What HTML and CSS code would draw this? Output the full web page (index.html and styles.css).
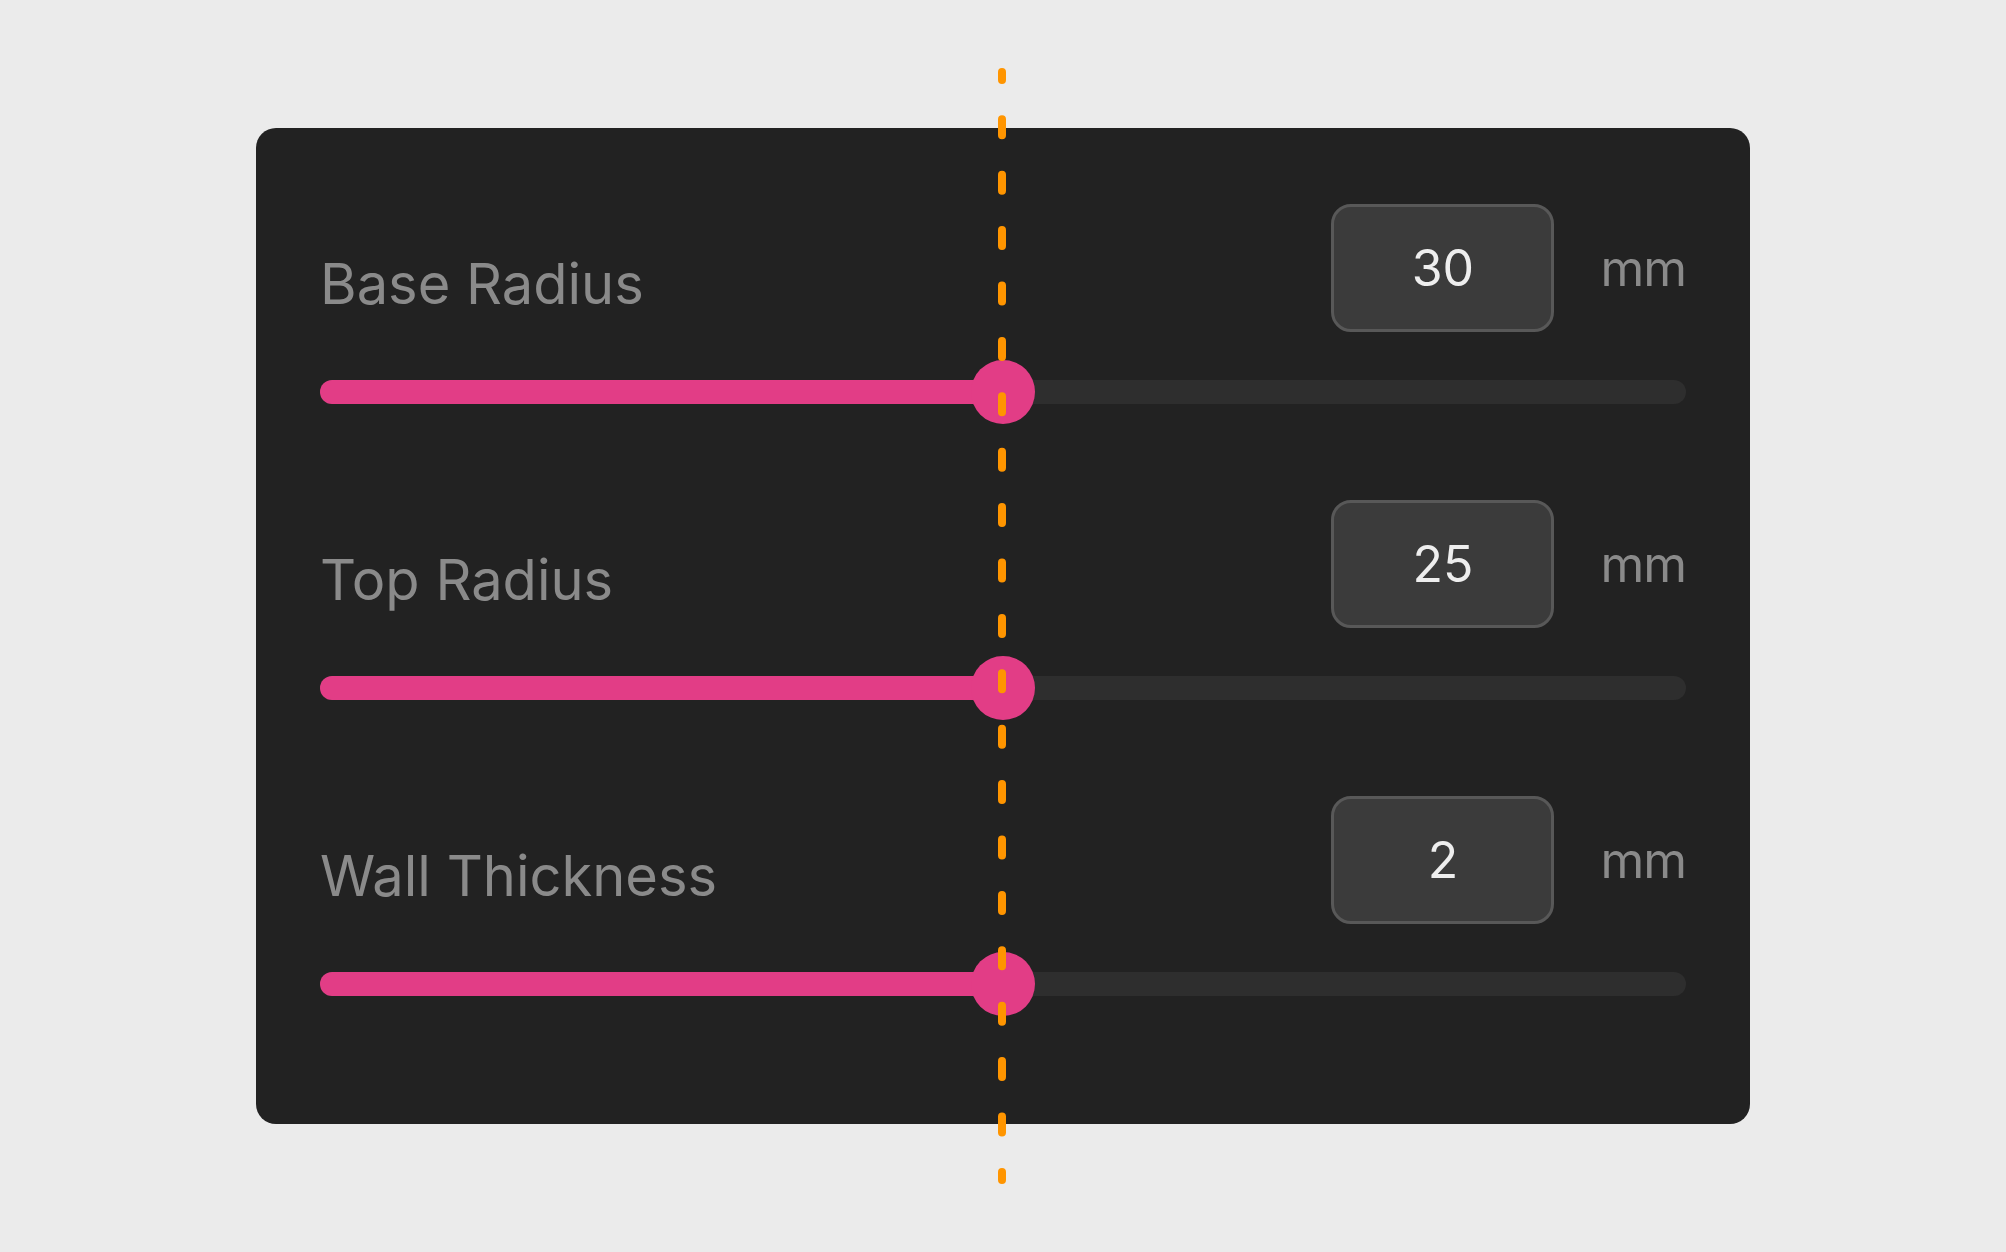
FILE: index.html
```html
<!DOCTYPE html>
<html lang="en">
<head>
  <meta charset="UTF-8" />
  <meta name="viewport" content="width=device-width, initial-scale=1.0"/>
  <title>Vase Parameters</title>
  <link rel="stylesheet" href="styles.css">
</head>
<body>

  <div class="panel">
    <div class="param">
      <div class="param-head">
        <span class="label">Base Radius</span>
        <div class="value">30</div>
        <span class="unit">mm</span>
      </div>
      <div class="track">
        <div class="fill" style="width: 50%"><span class="thumb"></span></div>
      </div>
    </div>

    <div class="param">
      <div class="param-head">
        <span class="label">Top Radius</span>
        <div class="value">25</div>
        <span class="unit">mm</span>
      </div>
      <div class="track">
        <div class="fill" style="width: 50%"><span class="thumb"></span></div>
      </div>
    </div>

    <div class="param">
      <div class="param-head">
        <span class="label">Wall Thickness</span>
        <div class="value">2</div>
        <span class="unit">mm</span>
      </div>
      <div class="track">
        <div class="fill" style="width: 50%"><span class="thumb"></span></div>
      </div>
    </div>
  </div>

  <!-- alignment guide -->
  <svg class="guide" width="8" height="1124" viewBox="0 0 8 1124">
    <line x1="4" y1="8" x2="4" y2="1116" stroke="#ff9500" stroke-width="8" stroke-linecap="round" stroke-dasharray="16 39.4" stroke-dashoffset="8.1"/>
  </svg>

</body>
</html>
```

FILE: styles.css
```css
* {
  box-sizing: border-box;
  margin: 0;
  padding: 0;
}

body {
  font-family: 'Inter', 'Liberation Sans', sans-serif;
  background: #ebebeb;
  min-height: 100vh;
  display: flex;
  align-items: center;
  justify-content: center;
  position: relative;
}

.panel {
  width: 1494px;
  background: #222222;
  border-radius: 20px;
  padding: 76px 64px 128px;
  display: flex;
  flex-direction: column;
  gap: 96px;
}

.param-head {
  display: flex;
  align-items: flex-end;
  height: 128px;
}

.label {
  flex: 1;
  font-size: 56px;
  line-height: 56px;
  color: #8a8a8a;
  margin-bottom: 20px;
}

.value {
  width: 223px;
  height: 128px;
  background: #3b3b3b;
  border: 3px solid #585858;
  border-radius: 20px;
  display: flex;
  align-items: center;
  justify-content: center;
  font-size: 50px;
  color: #eeeeee;
}

.unit {
  align-self: center;
  margin-left: 46px;
  font-size: 50px;
  line-height: 50px;
  letter-spacing: -1px;
  color: #8a8a8a;
}

.track {
  margin-top: 48px;
  height: 24px;
  border-radius: 12px;
  background: #2e2e2e;
}

.fill {
  position: relative;
  height: 100%;
  border-radius: 12px 0 0 12px;
  background: #e23d86;
}

.thumb {
  position: absolute;
  right: -32px;
  top: -20px;
  width: 64px;
  height: 64px;
  border-radius: 50%;
  background: #e23d86;
}

.guide {
  position: absolute;
  left: 998px;
  top: 64px;
}
```
